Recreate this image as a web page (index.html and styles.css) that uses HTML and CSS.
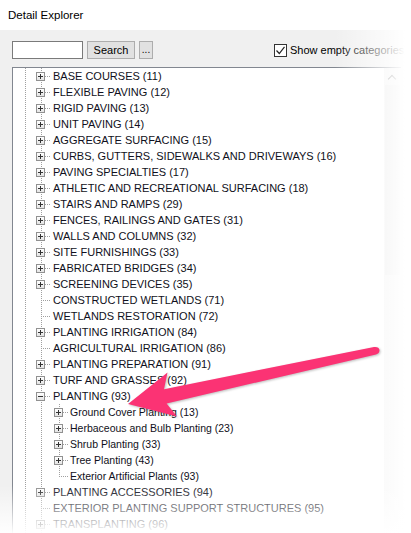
FILE: index.html
```html
<!DOCTYPE html>
<html>
<head>
    <title>Detail Explorer</title>
    <link rel="stylesheet" href="styles.css">
</head>
<body>
    <div class="window">
        <div class="caption">Detail Explorer</div>
        <div class="panel">
            <div class="toolbar">
                <input class="search-box" type="text">
                <button class="btn btn-search">Search</button>
                <button class="btn btn-more">...</button>
                <label class="check">
                    <span class="check-box">
                        <svg width="11" height="11" viewBox="0 0 11 11"><path d="M1.5 5.5 L4.3 8.5 L9.5 1.8" fill="none" stroke="#222" stroke-width="1.2"/></svg>
                    </span>
                    Show empty categories
                </label>
            </div>
            <div class="tree">
                <div class="scrollbar"><span class="scroll-up"></span><span class="scroll-thumb"></span></div>
                <div class="node"><span class="exp"><span class="box plus"></span></span><span class="label">BASE COURSES (11)</span></div>
                <div class="node"><span class="exp"><span class="box plus"></span></span><span class="label">FLEXIBLE PAVING (12)</span></div>
                <div class="node"><span class="exp"><span class="box plus"></span></span><span class="label">RIGID PAVING (13)</span></div>
                <div class="node"><span class="exp"><span class="box plus"></span></span><span class="label">UNIT PAVING (14)</span></div>
                <div class="node"><span class="exp"><span class="box plus"></span></span><span class="label">AGGREGATE SURFACING (15)</span></div>
                <div class="node"><span class="exp"><span class="box plus"></span></span><span class="label">CURBS, GUTTERS, SIDEWALKS AND DRIVEWAYS (16)</span></div>
                <div class="node"><span class="exp"><span class="box plus"></span></span><span class="label">PAVING SPECIALTIES (17)</span></div>
                <div class="node"><span class="exp"><span class="box plus"></span></span><span class="label">ATHLETIC AND RECREATIONAL SURFACING (18)</span></div>
                <div class="node"><span class="exp"><span class="box plus"></span></span><span class="label">STAIRS AND RAMPS (29)</span></div>
                <div class="node"><span class="exp"><span class="box plus"></span></span><span class="label">FENCES, RAILINGS AND GATES (31)</span></div>
                <div class="node"><span class="exp"><span class="box plus"></span></span><span class="label">WALLS AND COLUMNS (32)</span></div>
                <div class="node"><span class="exp"><span class="box plus"></span></span><span class="label">SITE FURNISHINGS (33)</span></div>
                <div class="node"><span class="exp"><span class="box plus"></span></span><span class="label">FABRICATED BRIDGES (34)</span></div>
                <div class="node"><span class="exp"><span class="box plus"></span></span><span class="label">SCREENING DEVICES (35)</span></div>
                <div class="node"><span class="exp"></span><span class="label">CONSTRUCTED WETLANDS (71)</span></div>
                <div class="node"><span class="exp"></span><span class="label">WETLANDS RESTORATION (72)</span></div>
                <div class="node"><span class="exp"><span class="box plus"></span></span><span class="label">PLANTING IRRIGATION (84)</span></div>
                <div class="node"><span class="exp"></span><span class="label">AGRICULTURAL IRRIGATION (86)</span></div>
                <div class="node"><span class="exp"><span class="box plus"></span></span><span class="label">PLANTING PREPARATION (91)</span></div>
                <div class="node"><span class="exp"><span class="box plus"></span></span><span class="label">TURF AND GRASSES (92)</span></div>
                <div class="node"><span class="exp"><span class="box minus"></span></span><span class="label">PLANTING (93)</span></div>
                <div class="children">
                    <div class="node sub"><span class="exp"><span class="box plus"></span></span><span class="label">Ground Cover Planting (13)</span></div>
                    <div class="node sub"><span class="exp"><span class="box plus"></span></span><span class="label">Herbaceous and Bulb Planting (23)</span></div>
                    <div class="node sub"><span class="exp"><span class="box plus"></span></span><span class="label">Shrub Planting (33)</span></div>
                    <div class="node sub"><span class="exp"><span class="box plus"></span></span><span class="label">Tree Planting (43)</span></div>
                    <div class="node sub"><span class="exp"></span><span class="label">Exterior Artificial Plants (93)</span></div>
                </div>
                <div class="node"><span class="exp"><span class="box plus"></span></span><span class="label">PLANTING ACCESSORIES (94)</span></div>
                <div class="node"><span class="exp"></span><span class="label">EXTERIOR PLANTING SUPPORT STRUCTURES (95)</span></div>
                <div class="node"><span class="exp"><span class="box plus"></span></span><span class="label">TRANSPLANTING (96)</span></div>
            </div>
        </div>
        <div class="fade"></div>
        <svg class="arrow" width="411" height="533" viewBox="0 0 411 533">
            <path d="M128 404 L167.5 372.5 L164 389.2 L374 347 Q379 346.5 379.5 350 Q379.5 353.5 376 354.5 L166.6 403.4 L177 416.5 Z" fill="#fb3374"/>
        </svg>
    </div>
</body>
</html>
```
FILE: styles.css
```css
html, body {
    margin: 0;
    padding: 0;
    background: #fff;
}

.window {
    position: relative;
    width: 411px;
    height: 533px;
    overflow: hidden;
    font-family: "Liberation Sans", Arial, sans-serif;
    color: #000;
}

.caption {
    height: 30px;
    line-height: 30px;
    padding-left: 8px;
    font-size: 11.5px;
    background: #fff;
}

.panel {
    background: #f0f0f0;
    height: 503px;
    padding-top: 11px;
    box-sizing: border-box;
}

.toolbar {
    display: flex;
    align-items: center;
    height: 18px;
    padding-left: 12px;
}

.search-box {
    width: 71px;
    height: 18px;
    box-sizing: border-box;
    border: 1px solid #7a7a7a;
    background: #fff;
    margin: 0;
    padding: 0;
}

.btn {
    height: 18px;
    box-sizing: border-box;
    margin: 0 0 0 4px;
    padding: 0;
    border: 1px solid #adadad;
    background: #e1e1e1;
    font-family: "Liberation Sans", Arial, sans-serif;
    font-size: 11px;
    color: #000;
}

.btn-search {
    width: 48px;
}

.btn-more {
    width: 14px;
    font-size: 10px;
    line-height: 10px;
}

.check {
    display: flex;
    align-items: center;
    margin-left: 121px;
    font-size: 11px;
    white-space: nowrap;
}

.check-box {
    width: 13px;
    height: 13px;
    box-sizing: border-box;
    border: 1px solid #333;
    background: #fff;
    margin-right: 3px;
    display: flex;
    align-items: center;
    justify-content: center;
}

.check-box svg {
    display: block;
}

.tree {
    position: relative;
    margin: 8px 0 0 12px;
    width: 389px;
    height: 480px;
    border-top: 1px solid #828790;
    border-left: 1px solid #828790;
    background-color: #fff;
    background-image:
        repeating-linear-gradient(to bottom, #a0a0a0 0 1px, transparent 1px 2px),
        repeating-linear-gradient(to bottom, #a0a0a0 0 1px, transparent 1px 2px);
    background-size: 1px 100%, 1px 100%;
    background-position: 12px 0, 28px 0;
    background-repeat: no-repeat;
    padding-left: 19px;
    box-sizing: border-box;
}

.scrollbar {
    position: absolute;
    right: 0;
    top: 0;
    width: 17px;
    height: 100%;
    background: #f0f0f0;
}

.scroll-up {
    position: absolute;
    left: 5px;
    top: 8px;
    width: 5px;
    height: 5px;
    border-left: 1px solid #606060;
    border-top: 1px solid #606060;
    transform: rotate(45deg);
}

.scroll-thumb {
    position: absolute;
    left: 1px;
    top: 17px;
    width: 15px;
    height: 190px;
    background: #e6e6e6;
}

.node {
    display: flex;
    align-items: center;
    height: 16px;
    font-size: 11px;
    white-space: nowrap;
}

.exp {
    position: relative;
    flex: none;
    width: 18px;
    height: 16px;
}

.exp::before {
    content: "";
    position: absolute;
    left: 9px;
    top: 8px;
    width: 10px;
    height: 1px;
    background: repeating-linear-gradient(to right, #a0a0a0 0 1px, transparent 1px 2px);
}

.box {
    position: absolute;
    left: 4px;
    top: 4px;
    width: 9px;
    height: 9px;
    box-sizing: border-box;
    border: 1px solid #919191;
    background: linear-gradient(to bottom, #fff, #e4e4e4);
}

.box::before {
    content: "";
    position: absolute;
    left: 1px;
    top: 3px;
    width: 5px;
    height: 1px;
    background: #333;
}

.box.plus::after {
    content: "";
    position: absolute;
    left: 3px;
    top: 1px;
    width: 1px;
    height: 5px;
    background: #333;
}

.label {
    padding-left: 3px;
    color: #101020;
}

.children {
    padding-left: 18px;
    background-image: repeating-linear-gradient(to bottom, #a0a0a0 0 1px, transparent 1px 2px);
    background-size: 1px calc(100% - 8px);
    background-position: 27px 0;
    background-repeat: no-repeat;
}

.sub {
    font-size: 10.5px;
}

.sub .label {
    padding-left: 2px;
}

.fade {
    position: absolute;
    left: 0;
    top: 0;
    width: 411px;
    height: 533px;
    background:
        linear-gradient(to bottom, rgba(255, 255, 255, 0) 485px, rgba(255, 255, 255, 0.97) 533px),
        linear-gradient(to right, rgba(255, 255, 255, 0) 335px, rgba(255, 255, 255, 0.85) 395px, #fff 405px);
}

.arrow {
    position: absolute;
    left: 0;
    top: 0;
    filter: drop-shadow(1px 1px 1px rgba(0, 0, 0, 0.25));
}
```
